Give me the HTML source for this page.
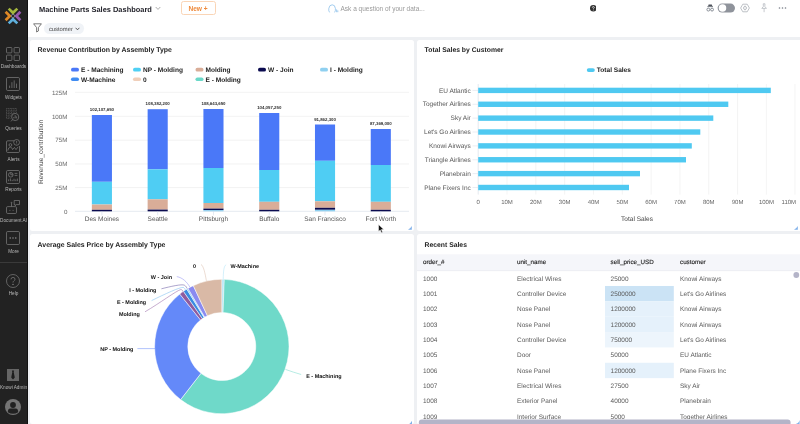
<!DOCTYPE html>
<html><head><meta charset="utf-8"><title>Machine Parts Sales Dashboard</title>
<style>
*{box-sizing:border-box}
html,body{margin:0;padding:0}
body{width:800px;height:424px;overflow:hidden;background:#eef0f3;font-family:"Liberation Sans",sans-serif;position:relative;color:#222}
#app{position:absolute;left:0;top:0;width:800px;height:424px;overflow:hidden;will-change:transform;transform:translateZ(0)}
.abs{position:absolute}
#side{position:absolute;left:0;top:0;width:28px;height:424px;background:#222;border-right:1px solid #111}
#side .lbl{position:absolute;left:-10px;width:47px;text-align:center;font-size:4.7px;color:#b9b9b9;white-space:nowrap;line-height:6px}
#side svg{position:absolute;overflow:visible}
#hdr{position:absolute;left:28px;top:0;right:0;height:37px;background:#fff}
.panel{position:absolute;background:#fff;border-radius:2.5px;overflow:hidden}
.ptitle{position:absolute;font-weight:bold;font-size:7px;color:#222;white-space:nowrap;line-height:10px}
.t{position:absolute;white-space:nowrap}
svg text{font-family:"Liberation Sans",sans-serif;text-rendering:geometricPrecision}
</style></head>
<body>
<div id="app"><div id="hdr"><svg class="abs" style="left:0;top:0" width="200" height="20" viewBox="28 0 200 20"><text x="39" y="11.8" font-size="7.45" font-weight="bold" fill="#23232b">Machine Parts Sales Dashboard</text></svg><svg class="abs" style="left:126.5px;top:6px" width="6" height="5" viewBox="0 0 6 5"><path d="M0.7,1L3,3.4L5.3,1" fill="none" stroke="#888" stroke-width="0.7"/></svg><div class="abs" style="left:152.5px;top:1px;width:35px;height:14px;border:1px solid #fad5b6;border-radius:2.5px;color:#ee8a3c;font-weight:bold;font-size:6.6px;line-height:13.4px;text-align:center">New +</div><svg class="abs" style="left:299.5px;top:3.6px" width="11" height="10" viewBox="0 0 11 10"><g fill="none" stroke="#7db7e8" stroke-width="0.7"><path d="M1.6,8.4Q0.4,7 0.8,4.4Q1.4,0.8 4.2,0.8Q7,0.8 7.4,4.4Q7.7,7 6.6,8.4"/><path d="M8.6,5.4V8.2M9.8,6.4V8.2"/></g></svg><div class="t" style="left:312.5px;top:3.6px;font-size:6.5px;line-height:10px;color:#999">Ask a question of your data...</div><svg class="abs" style="left:561.8px;top:5.2px" width="6.6" height="6.6" viewBox="0 0 10 10"><circle cx="5" cy="5" r="5" fill="#333"/><path d="M3.5,4Q3.5,2.4 5,2.4Q6.5,2.4 6.5,3.8Q6.5,4.7 5.6,5.1Q5,5.4 5,6.2" fill="none" stroke="#fff" stroke-width="1.1"/><circle cx="5" cy="7.7" r="0.7" fill="#fff"/></svg><svg class="abs" style="left:678px;top:4px" width="8.4" height="8.4" viewBox="0 0 8.4 8.4"><path d="M2.6,0.6H5.8L6.3,2.2H2.1Z" fill="#4f535c"/><rect x="1.4" y="2.2" width="5.6" height="0.9" fill="#6b7079"/><g fill="none" stroke="#7d838d" stroke-width="0.9"><circle cx="2.35" cy="5.6" r="1.45"/><circle cx="6.05" cy="5.6" r="1.45"/></g></svg><svg class="abs" style="left:688px;top:2px" width="22" height="13" viewBox="716 2 22 13"><rect x="717.6" y="3.6" width="17.4" height="9" rx="4.5" fill="#8f939b"/><circle cx="722.5" cy="8.1" r="3.75" fill="#fff"/></svg><svg class="abs" style="left:711.6px;top:2.9px" width="10" height="10" viewBox="-5 -5 10 10"><g fill="none" stroke="#9aa0a8" stroke-width="0.65"><path d="M-4.4,0L-2.2,-3.8H2.2L4.4,0L2.2,3.8H-2.2Z"/><circle r="1.5"/><path d="M0,-1.5V-2.4M0,1.5V2.4"/></g></svg><svg class="abs" style="left:731.5px;top:3.2px" width="8" height="10" viewBox="0 0 8 10"><g fill="none" stroke="#a8adb5" stroke-width="0.65"><path d="M3.2,0.8H5L4.8,3.4L6.4,5.4H1.8L3.4,3.4Z"/><path d="M4.1,5.4V9.2"/></g></svg><svg class="abs" style="left:750px;top:6px" width="9" height="4" viewBox="0 0 9 4"><g fill="#8a8f98"><rect x="0.8" y="1.3" width="1.4" height="1.4" rx="0.3"/><rect x="3.8" y="1.3" width="1.4" height="1.4" rx="0.3"/><rect x="6.8" y="1.3" width="1.4" height="1.4" rx="0.3"/></g></svg><svg class="abs" style="left:4.600000000000001px;top:23.4px" width="9" height="10" viewBox="0 0 9 10"><path d="M0.6,0.8H8.4L5.4,4.6V8L3.6,9V4.6Z" fill="none" stroke="#444" stroke-width="0.7" stroke-linejoin="round"/></svg><div class="abs" style="left:16px;top:23px;width:39.5px;height:11.4px;border-radius:5.7px;background:#f0f3f7"></div><svg class="abs" style="left:16px;top:22px" width="40" height="13" viewBox="44 22 40 13"><text x="48.9" y="30.6" font-size="5.85" fill="#444">customer</text></svg><svg class="abs" style="left:47.3px;top:27px" width="5" height="4" viewBox="0 0 5 4"><path d="M0.6,0.8L2.5,2.8L4.4,0.8" fill="none" stroke="#333" stroke-width="0.8"/></svg></div>
<div class="panel" style="left:30px;top:40px;width:384px;height:191px"><svg class="abs" style="left:0;top:0" width="384" height="191" viewBox="30 40 384 191"><text x="37.6" y="51.65" font-size="6.93" font-weight="bold" fill="#222">Revenue Contribution by Assembly Type</text><rect x="71" y="67.8" width="8" height="3.7" rx="1.85" fill="#4a78f8"/><text x="81" y="71.89999999999999" font-size="6.55" font-weight="bold" fill="#222">E - Machining</text><rect x="133" y="67.8" width="8" height="3.7" rx="1.85" fill="#4fd0f4"/><text x="143" y="71.89999999999999" font-size="6.55" font-weight="bold" fill="#222">NP - Molding</text><rect x="195.5" y="67.8" width="8" height="3.7" rx="1.85" fill="#d9ad98"/><text x="205.5" y="71.89999999999999" font-size="6.55" font-weight="bold" fill="#222">Molding</text><rect x="258" y="67.8" width="8" height="3.7" rx="1.85" fill="#0b0b4f"/><text x="268" y="71.89999999999999" font-size="6.55" font-weight="bold" fill="#222">W - Join</text><rect x="320" y="67.8" width="8" height="3.7" rx="1.85" fill="#8fd0f0"/><text x="330" y="71.89999999999999" font-size="6.55" font-weight="bold" fill="#222">I - Molding</text><rect x="71" y="77.4" width="8" height="3.7" rx="1.85" fill="#3f8cf2"/><text x="81" y="81.5" font-size="6.55" font-weight="bold" fill="#222">W-Machine</text><rect x="133" y="77.4" width="8" height="3.7" rx="1.85" fill="#f0cfba"/><text x="143" y="81.5" font-size="6.55" font-weight="bold" fill="#222">0</text><rect x="195.5" y="77.4" width="8" height="3.7" rx="1.85" fill="#6bd8c8"/><text x="205.5" y="81.5" font-size="6.55" font-weight="bold" fill="#222">E - Molding</text><line x1="75" x2="409" y1="92.3" y2="92.3" stroke="#e9e9e9" stroke-width="0.6"/><text x="67.4" y="94.5" font-size="6.2" text-anchor="end" fill="#666">125M</text><line x1="75" x2="409" y1="116.3" y2="116.3" stroke="#e9e9e9" stroke-width="0.6"/><text x="67.4" y="118.5" font-size="6.2" text-anchor="end" fill="#666">100M</text><line x1="75" x2="409" y1="140.2" y2="140.2" stroke="#e9e9e9" stroke-width="0.6"/><text x="67.4" y="142.39999999999998" font-size="6.2" text-anchor="end" fill="#666">75M</text><line x1="75" x2="409" y1="164" y2="164" stroke="#e9e9e9" stroke-width="0.6"/><text x="67.4" y="166.2" font-size="6.2" text-anchor="end" fill="#666">50M</text><line x1="75" x2="409" y1="187.6" y2="187.6" stroke="#e9e9e9" stroke-width="0.6"/><text x="67.4" y="189.79999999999998" font-size="6.2" text-anchor="end" fill="#666">25M</text><line x1="75" x2="409" y1="211.3" y2="211.3" stroke="#d4dbe6" stroke-width="0.6"/><text x="67.4" y="213.5" font-size="6.2" text-anchor="end" fill="#666">0</text><text transform="translate(43.3,152) rotate(-90)" font-size="6.6" text-anchor="middle" fill="#444">Revenue_contribution</text><rect x="91.85" y="115" width="20.1" height="66.80" fill="#4a78f8"/><rect x="91.85" y="181.8" width="20.1" height="22.70" fill="#4fcdf3"/><rect x="91.85" y="204.5" width="20.1" height="5.30" fill="#d9ad98"/><rect x="91.85" y="209.8" width="20.1" height="1.50" fill="#0c0c50"/><text x="101.90" y="111" font-size="4.35" font-weight="bold" text-anchor="middle" fill="#333">102,107,650</text><text x="101.90" y="221.35" font-size="6.5" text-anchor="middle" fill="#555">Des Moines</text><line x1="101.90" x2="101.90" y1="211.3" y2="215.3" stroke="#ccd6eb" stroke-width="0.5"/><rect x="147.63" y="109.2" width="20.1" height="60.10" fill="#4a78f8"/><rect x="147.63" y="169.3" width="20.1" height="30.00" fill="#4fcdf3"/><rect x="147.63" y="199.3" width="20.1" height="10.30" fill="#d9ad98"/><rect x="147.63" y="209.6" width="20.1" height="1.70" fill="#0c0c50"/><text x="157.68" y="105.2" font-size="4.35" font-weight="bold" text-anchor="middle" fill="#333">108,382,200</text><text x="157.68" y="221.35" font-size="6.5" text-anchor="middle" fill="#555">Seattle</text><line x1="157.68" x2="157.68" y1="211.3" y2="215.3" stroke="#ccd6eb" stroke-width="0.5"/><rect x="203.41" y="109" width="20.1" height="59.00" fill="#4a78f8"/><rect x="203.41" y="168" width="20.1" height="35.00" fill="#4fcdf3"/><rect x="203.41" y="203" width="20.1" height="5.60" fill="#d9ad98"/><rect x="203.41" y="208.6" width="20.1" height="1.50" fill="#0c0c50"/><rect x="203.41" y="210.1" width="20.1" height="1.20" fill="#8fd0f0"/><text x="213.46" y="105" font-size="4.35" font-weight="bold" text-anchor="middle" fill="#333">108,643,650</text><text x="213.46" y="221.35" font-size="6.5" text-anchor="middle" fill="#555">Pittsburgh</text><line x1="213.46" x2="213.46" y1="211.3" y2="215.3" stroke="#ccd6eb" stroke-width="0.5"/><rect x="259.19" y="113" width="20.1" height="57.00" fill="#4a78f8"/><rect x="259.19" y="170" width="20.1" height="31.80" fill="#4fcdf3"/><rect x="259.19" y="201.8" width="20.1" height="8.00" fill="#d9ad98"/><rect x="259.19" y="209.8" width="20.1" height="1.50" fill="#0c0c50"/><text x="269.24" y="109" font-size="4.35" font-weight="bold" text-anchor="middle" fill="#333">104,057,250</text><text x="269.24" y="221.35" font-size="6.5" text-anchor="middle" fill="#555">Buffalo</text><line x1="269.24" x2="269.24" y1="211.3" y2="215.3" stroke="#ccd6eb" stroke-width="0.5"/><rect x="314.97" y="124.5" width="20.1" height="36.30" fill="#4a78f8"/><rect x="314.97" y="160.8" width="20.1" height="40.50" fill="#4fcdf3"/><rect x="314.97" y="201.3" width="20.1" height="6.50" fill="#d9ad98"/><rect x="314.97" y="207.8" width="20.1" height="2.00" fill="#0c0c50"/><rect x="314.97" y="209.8" width="20.1" height="1.50" fill="#8fd0f0"/><text x="325.02" y="120.5" font-size="4.35" font-weight="bold" text-anchor="middle" fill="#333">91,862,300</text><text x="325.02" y="221.35" font-size="6.5" text-anchor="middle" fill="#555">San Francisco</text><line x1="325.02" x2="325.02" y1="211.3" y2="215.3" stroke="#ccd6eb" stroke-width="0.5"/><rect x="370.75" y="129" width="20.1" height="36.00" fill="#4a78f8"/><rect x="370.75" y="165" width="20.1" height="36.80" fill="#4fcdf3"/><rect x="370.75" y="201.8" width="20.1" height="8.00" fill="#d9ad98"/><rect x="370.75" y="209.8" width="20.1" height="1.50" fill="#0c0c50"/><text x="380.80" y="125" font-size="4.35" font-weight="bold" text-anchor="middle" fill="#333">87,369,000</text><text x="380.80" y="221.35" font-size="6.5" text-anchor="middle" fill="#555">Fort Worth</text><line x1="380.80" x2="380.80" y1="211.3" y2="215.3" stroke="#ccd6eb" stroke-width="0.5"/></svg><svg class="abs" style="right:2px;bottom:1.4px" width="3.8" height="3.8" viewBox="0 0 4 4"><path d="M4,0V4H0Q2.6,2.6 4,0Z" fill="#7fb0ea"/></svg></div>
<div class="panel" style="left:417px;top:40px;width:383px;height:191px;border-radius:2.5px 0 0 2.5px"><svg class="abs" style="left:0;top:0" width="383" height="191" viewBox="417 40 383 191"><text x="424.6" y="51.65" font-size="6.8" font-weight="bold" fill="#222">Total Sales by Customer</text><rect x="586.8" y="68.2" width="8" height="3.7" rx="1.85" fill="#4fc9f1"/><text x="596.8" y="72.3" font-size="6.55" font-weight="bold" fill="#222">Total Sales</text><line x1="478.20" x2="478.20" y1="84" y2="194.6" stroke="#d4dbe6" stroke-width="0.6"/><text x="478.20" y="204.2" font-size="6" text-anchor="middle" fill="#666">0</text><line x1="507.02" x2="507.02" y1="84" y2="194.6" stroke="#ececec" stroke-width="0.6"/><text x="507.02" y="204.2" font-size="6" text-anchor="middle" fill="#666">10M</text><line x1="535.84" x2="535.84" y1="84" y2="194.6" stroke="#ececec" stroke-width="0.6"/><text x="535.84" y="204.2" font-size="6" text-anchor="middle" fill="#666">20M</text><line x1="564.66" x2="564.66" y1="84" y2="194.6" stroke="#ececec" stroke-width="0.6"/><text x="564.66" y="204.2" font-size="6" text-anchor="middle" fill="#666">30M</text><line x1="593.48" x2="593.48" y1="84" y2="194.6" stroke="#ececec" stroke-width="0.6"/><text x="593.48" y="204.2" font-size="6" text-anchor="middle" fill="#666">40M</text><line x1="622.30" x2="622.30" y1="84" y2="194.6" stroke="#ececec" stroke-width="0.6"/><text x="622.30" y="204.2" font-size="6" text-anchor="middle" fill="#666">50M</text><line x1="651.12" x2="651.12" y1="84" y2="194.6" stroke="#ececec" stroke-width="0.6"/><text x="651.12" y="204.2" font-size="6" text-anchor="middle" fill="#666">60M</text><line x1="679.94" x2="679.94" y1="84" y2="194.6" stroke="#ececec" stroke-width="0.6"/><text x="679.94" y="204.2" font-size="6" text-anchor="middle" fill="#666">70M</text><line x1="708.76" x2="708.76" y1="84" y2="194.6" stroke="#ececec" stroke-width="0.6"/><text x="708.76" y="204.2" font-size="6" text-anchor="middle" fill="#666">80M</text><line x1="737.58" x2="737.58" y1="84" y2="194.6" stroke="#ececec" stroke-width="0.6"/><text x="737.58" y="204.2" font-size="6" text-anchor="middle" fill="#666">90M</text><line x1="766.40" x2="766.40" y1="84" y2="194.6" stroke="#ececec" stroke-width="0.6"/><text x="766.40" y="204.2" font-size="6" text-anchor="middle" fill="#666">100M</text><line x1="795.00" x2="795.00" y1="84" y2="194.6" stroke="#ececec" stroke-width="0.6"/><text x="788.80" y="204.2" font-size="6" text-anchor="middle" fill="#666">110M</text><rect x="478.2" y="87.70" width="292.60" height="5.4" fill="#4fc9f1"/><line x1="472.5" x2="478.2" y1="90.40" y2="90.40" stroke="#d4dbe6" stroke-width="0.5"/><text x="470.8" y="92.60" font-size="6.5" text-anchor="end" fill="#555">EU Atlantic</text><rect x="478.2" y="101.57" width="250.10" height="5.4" fill="#4fc9f1"/><line x1="472.5" x2="478.2" y1="104.27" y2="104.27" stroke="#d4dbe6" stroke-width="0.5"/><text x="470.8" y="106.47" font-size="6.5" text-anchor="end" fill="#555">Together Airlines</text><rect x="478.2" y="115.44" width="235.10" height="5.4" fill="#4fc9f1"/><line x1="472.5" x2="478.2" y1="118.14" y2="118.14" stroke="#d4dbe6" stroke-width="0.5"/><text x="470.8" y="120.34" font-size="6.5" text-anchor="end" fill="#555">Sky Air</text><rect x="478.2" y="129.31" width="222.10" height="5.4" fill="#4fc9f1"/><line x1="472.5" x2="478.2" y1="132.01" y2="132.01" stroke="#d4dbe6" stroke-width="0.5"/><text x="470.8" y="134.21" font-size="6.5" text-anchor="end" fill="#555">Let's Go Airlines</text><rect x="478.2" y="143.18" width="213.60" height="5.4" fill="#4fc9f1"/><line x1="472.5" x2="478.2" y1="145.88" y2="145.88" stroke="#d4dbe6" stroke-width="0.5"/><text x="470.8" y="148.08" font-size="6.5" text-anchor="end" fill="#555">Knowi Airways</text><rect x="478.2" y="157.05" width="207.80" height="5.4" fill="#4fc9f1"/><line x1="472.5" x2="478.2" y1="159.75" y2="159.75" stroke="#d4dbe6" stroke-width="0.5"/><text x="470.8" y="161.95" font-size="6.5" text-anchor="end" fill="#555">Triangle Airlines</text><rect x="478.2" y="170.92" width="161.80" height="5.4" fill="#4fc9f1"/><line x1="472.5" x2="478.2" y1="173.62" y2="173.62" stroke="#d4dbe6" stroke-width="0.5"/><text x="470.8" y="175.82" font-size="6.5" text-anchor="end" fill="#555">Planebrain</text><rect x="478.2" y="184.79" width="150.80" height="5.4" fill="#4fc9f1"/><line x1="472.5" x2="478.2" y1="187.49" y2="187.49" stroke="#d4dbe6" stroke-width="0.5"/><text x="470.8" y="189.69" font-size="6.5" text-anchor="end" fill="#555">Plane Fixers Inc</text><text x="637" y="221.4" font-size="6.5" text-anchor="middle" fill="#444">Total Sales</text></svg><svg class="abs" style="right:2px;bottom:1.4px" width="3.8" height="3.8" viewBox="0 0 4 4"><path d="M4,0V4H0Q2.6,2.6 4,0Z" fill="#7fb0ea"/></svg></div>
<div class="panel" style="left:30px;top:234px;width:384px;height:190px"><svg class="abs" style="left:0;top:0" width="384" height="190" viewBox="30 234 384 190"><text x="37.6" y="246.8" font-size="6.93" font-weight="bold" fill="#222">Average Sales Price by Assembly Type</text><path d="M221.80,279.30A67.2,67.2 0 0 1 224.26,279.35L223.05,312.52A34,34 0 0 0 221.80,312.50Z" fill="#a9e1f6" stroke="#fff" stroke-width="0.5" stroke-linejoin="round"/><path d="M224.26,279.35A67.2,67.2 0 1 1 180.61,399.60L200.96,373.37A34,34 0 1 0 223.05,312.52Z" fill="#6fd9c9" stroke="#fff" stroke-width="0.5" stroke-linejoin="round"/><path d="M180.61,399.60A67.2,67.2 0 0 1 179.78,294.06L200.54,319.97A34,34 0 0 0 200.96,373.37Z" fill="#6489f9" stroke="#fff" stroke-width="0.5" stroke-linejoin="round"/><path d="M179.78,294.06A67.2,67.2 0 0 1 183.45,291.32L202.40,318.58A34,34 0 0 0 200.54,319.97Z" fill="#8f5b9e" stroke="#fff" stroke-width="0.5" stroke-linejoin="round"/><path d="M183.45,291.32A67.2,67.2 0 0 1 186.79,289.14L204.09,317.48A34,34 0 0 0 202.40,318.58Z" fill="#3a8be2" stroke="#fff" stroke-width="0.5" stroke-linejoin="round"/><path d="M186.79,289.14A67.2,67.2 0 0 1 188.00,288.42L204.70,317.11A34,34 0 0 0 204.09,317.48Z" fill="#8fd0f0" stroke="#fff" stroke-width="0.5" stroke-linejoin="round"/><path d="M188.00,288.42A67.2,67.2 0 0 1 193.29,285.65L207.38,315.71A34,34 0 0 0 204.70,317.11Z" fill="#8a8af0" stroke="#fff" stroke-width="0.5" stroke-linejoin="round"/><path d="M193.29,285.65A67.2,67.2 0 0 1 221.80,279.30L221.80,312.50A34,34 0 0 0 207.38,315.71Z" fill="#d9b9a6" stroke="#fff" stroke-width="0.5" stroke-linejoin="round"/><path d="M226.2,264.6C223.6,266 223.4,272 223.2,279.6" fill="none" stroke="#a9e1f6" stroke-width="0.5"/><path d="M201,264.4C203.6,266 205,273 206.4,280.8" fill="none" stroke="#d9b9a6" stroke-width="0.5"/><path d="M176.8,276.6C182.6,277.6 187,282 189.8,287" fill="none" stroke="#8a8af0" stroke-width="0.5"/><path d="M161.4,288.8C170,286.6 182,283.8 184.4,285.2C186,286 186.6,287.6 187.2,288.6" fill="none" stroke="#5a4a9a" stroke-width="0.5"/><path d="M151.6,300.6C165,294 180,287 183.2,287.4C184.6,287.8 185,289 185.4,290" fill="none" stroke="#6fb6ee" stroke-width="0.5"/><path d="M145,311.8C160,303 176,291 180.6,289.6C182,289.4 182.6,290.6 183,291.6" fill="none" stroke="#8f5b9e" stroke-width="0.5"/><path d="M137.4,348.6H155" fill="none" stroke="#6489f9" stroke-width="0.5"/><path d="M285.4,369.4C291,371.4 296,373 301.2,374.5" fill="none" stroke="#6fd9c9" stroke-width="0.5"/><text x="230.4" y="267.6" font-size="5.45" font-weight="bold" text-anchor="start" fill="#111">W-Machine</text><text x="196" y="267.6" font-size="5.45" font-weight="bold" text-anchor="end" fill="#111">0</text><text x="172" y="279.4" font-size="5.45" font-weight="bold" text-anchor="end" fill="#111">W - Join</text><text x="156.4" y="291.8" font-size="5.45" font-weight="bold" text-anchor="end" fill="#111">I - Molding</text><text x="146.2" y="303.8" font-size="5.45" font-weight="bold" text-anchor="end" fill="#111">E - Molding</text><text x="139.8" y="315.6" font-size="5.45" font-weight="bold" text-anchor="end" fill="#111">Molding</text><text x="133.4" y="350.6" font-size="5.45" font-weight="bold" text-anchor="end" fill="#111">NP - Molding</text><text x="306.2" y="378.2" font-size="5.45" font-weight="bold" text-anchor="start" fill="#111">E - Machining</text><path d="M412,420.8V424.6H408.2Q410.8,423.4 412,420.8Z" fill="#7fb0ea"/></svg></div>
<div class="panel" style="left:417px;top:234px;width:383px;height:190px;border-radius:2.5px 0 0 2.5px"><svg class="abs" style="left:0;top:0" width="383" height="190" viewBox="417 234 383 190"><text x="424.6" y="246.8" font-size="6.8" font-weight="bold" fill="#222">Recent Sales</text><rect x="417" y="254.3" width="383" height="16.3" fill="#f5f6fa"/><rect x="417" y="270.5" width="383" height="0.6" fill="#e4e6ec"/><text x="423" y="264.15" font-size="6.25" fill="#1c1c1c" stroke="#1c1c1c" stroke-width="0.13">order_#</text><text x="517" y="264.15" font-size="6.25" fill="#1c1c1c" stroke="#1c1c1c" stroke-width="0.13">unit_name</text><text x="610.6" y="264.15" font-size="6.25" fill="#1c1c1c" stroke="#1c1c1c" stroke-width="0.13">sell_price_USD</text><text x="680" y="264.15" font-size="6.25" fill="#1c1c1c" stroke="#1c1c1c" stroke-width="0.13">customer</text><text x="423" y="280.60" font-size="6.45" fill="#5a5a5a">1000</text><text x="517" y="280.60" font-size="6.45" fill="#5a5a5a">Electrical Wires</text><text x="610.6" y="280.60" font-size="6.45" fill="#5a5a5a">25000</text><text x="680" y="280.60" font-size="6.45" fill="#5a5a5a">Knowi Airways</text><rect x="605" y="285.98" width="68.8" height="15.36" fill="#cbe3f5"/><text x="423" y="295.96" font-size="6.45" fill="#5a5a5a">1001</text><text x="517" y="295.96" font-size="6.45" fill="#5a5a5a">Controller Device</text><text x="610.6" y="295.96" font-size="6.45" fill="#5a5a5a">2500000</text><text x="680" y="295.96" font-size="6.45" fill="#5a5a5a">Let's Go Airlines</text><rect x="605" y="301.34" width="68.8" height="15.36" fill="#e5f1fb"/><text x="423" y="311.32" font-size="6.45" fill="#5a5a5a">1002</text><text x="517" y="311.32" font-size="6.45" fill="#5a5a5a">Nose Panel</text><text x="610.6" y="311.32" font-size="6.45" fill="#5a5a5a">1200000</text><text x="680" y="311.32" font-size="6.45" fill="#5a5a5a">Knowi Airways</text><rect x="605" y="316.70" width="68.8" height="15.36" fill="#e5f1fb"/><text x="423" y="326.68" font-size="6.45" fill="#5a5a5a">1003</text><text x="517" y="326.68" font-size="6.45" fill="#5a5a5a">Nose Panel</text><text x="610.6" y="326.68" font-size="6.45" fill="#5a5a5a">1200000</text><text x="680" y="326.68" font-size="6.45" fill="#5a5a5a">Knowi Airways</text><rect x="605" y="332.06" width="68.8" height="15.36" fill="#edf5fc"/><text x="423" y="342.04" font-size="6.45" fill="#5a5a5a">1004</text><text x="517" y="342.04" font-size="6.45" fill="#5a5a5a">Controller Device</text><text x="610.6" y="342.04" font-size="6.45" fill="#5a5a5a">750000</text><text x="680" y="342.04" font-size="6.45" fill="#5a5a5a">Let's Go Airlines</text><text x="423" y="357.40" font-size="6.45" fill="#5a5a5a">1005</text><text x="517" y="357.40" font-size="6.45" fill="#5a5a5a">Door</text><text x="610.6" y="357.40" font-size="6.45" fill="#5a5a5a">50000</text><text x="680" y="357.40" font-size="6.45" fill="#5a5a5a">EU Atlantic</text><rect x="605" y="362.78" width="68.8" height="15.36" fill="#e5f1fb"/><text x="423" y="372.76" font-size="6.45" fill="#5a5a5a">1006</text><text x="517" y="372.76" font-size="6.45" fill="#5a5a5a">Nose Panel</text><text x="610.6" y="372.76" font-size="6.45" fill="#5a5a5a">1200000</text><text x="680" y="372.76" font-size="6.45" fill="#5a5a5a">Plane Fixers Inc</text><text x="423" y="388.12" font-size="6.45" fill="#5a5a5a">1007</text><text x="517" y="388.12" font-size="6.45" fill="#5a5a5a">Electrical Wires</text><text x="610.6" y="388.12" font-size="6.45" fill="#5a5a5a">27500</text><text x="680" y="388.12" font-size="6.45" fill="#5a5a5a">Sky Air</text><text x="423" y="403.48" font-size="6.45" fill="#5a5a5a">1008</text><text x="517" y="403.48" font-size="6.45" fill="#5a5a5a">Exterior Panel</text><text x="610.6" y="403.48" font-size="6.45" fill="#5a5a5a">40000</text><text x="680" y="403.48" font-size="6.45" fill="#5a5a5a">Planebrain</text><text x="423" y="418.84" font-size="6.45" fill="#5a5a5a">1009</text><text x="517" y="418.84" font-size="6.45" fill="#5a5a5a">Interior Surface</text><text x="610.6" y="418.84" font-size="6.45" fill="#5a5a5a">5000</text><text x="680" y="418.84" font-size="6.45" fill="#5a5a5a">Together Airlines</text><circle cx="796.3" cy="275" r="2.9" fill="#b4b4c8"/><rect x="417" y="419" width="383" height="6" fill="#fff"/><rect x="418.8" y="419.6" width="371.8" height="8" rx="3" fill="#b4b4c8"/><path d="M799.6,420V424H795.6Q798.8,423.4 799.6,420Z" fill="#7fb0ea"/></svg></div>
<div id="side"><svg style="left:4.6px;top:8px" width="16" height="16" viewBox="-8 -8 16 16">
    <g fill="none" stroke-width="2.7" stroke-linejoin="miter">
      <path d="M-4.3,-7.4L0,-3.2L4.3,-7.4" stroke="#a4b73d"/>
      <path d="M-7.4,-4.3L-3.2,0L-7.4,4.3" stroke="#df8826"/>
      <path d="M7.4,-4.3L3.2,0L7.4,4.3" stroke="#9658ae"/>
      <path d="M-4.3,7.4L0,3.2L4.3,7.4" stroke="#5fb0dc"/>
    </g>
    <circle r="1.7" fill="#2a2a2a" stroke="#8c93a0" stroke-width="0.8"/>
    </svg><svg style="left:6px;top:46.7px" width="14" height="14" viewBox="0 0 14 14"><g fill="none" stroke="#808080" stroke-width="0.7"><rect x="0.5" y="0.5" width="5.4" height="5.4" rx="0.8"/><rect x="8.1" y="0.5" width="5.4" height="5.4" rx="0.8"/><rect x="0.5" y="8.1" width="5.4" height="5.4" rx="0.8"/><rect x="8.1" y="8.1" width="5.4" height="5.4" rx="0.8"/></g></svg><div class="lbl" style="top:64.3px">Dashboards</div><svg style="left:6px;top:77.3px" width="14" height="14" viewBox="0 0 14 14"><g fill="none" stroke="#808080" stroke-width="0.7"><rect x="0.5" y="0.5" width="13" height="13" rx="1.2"/><path d="M3.6,11V8.6M5.9,11V5.2M8.2,11V3.4M10.5,11V6.6"/></g></svg><div class="lbl" style="top:95.0px">Widgets</div><svg style="left:6px;top:108px" width="14" height="14" viewBox="0 0 14 14"><g fill="none" stroke="#666" stroke-width="0.6"><path d="M0.5,0.5H10.5M0.5,3H10.5M0.5,5.5H10.5M0.5,8H5.5M0.5,10.5H4.5M0.5,0.5V10.5M3,0.5V10.5M5.5,0.5V8M8,0.5V5.5M10.5,0.5V5.5" stroke-dasharray="1 0.7"/></g><g fill="none" stroke="#808080" stroke-width="0.7"><circle cx="9.2" cy="9" r="3.6" fill="#222"/><path d="M6.6,11.6L5,13.4M7.8,10.4V9M9.2,10.4V7.2M10.6,10.4V8.4"/></g></svg><div class="lbl" style="top:125.6px">Queries</div><svg style="left:6px;top:138.6px" width="14" height="14" viewBox="0 0 14 14"><g fill="none" stroke="#808080" stroke-width="0.7"><path d="M8,1.8H1.7Q0.5,1.8 0.5,3V12.3Q0.5,13.5 1.7,13.5H12.3Q13.5,13.5 13.5,12.3V7"/><circle cx="4.4" cy="6" r="1.4"/><path d="M1.8,11.6Q2.2,8.2 4.4,8.2Q6,8.2 6.6,10.6L8.4,8.4L10,10.6L12.2,7.8"/><circle cx="10.6" cy="3.4" r="2.9"/><path d="M10.6,1.8V3.8M10.6,4.6V5.2"/></g></svg><div class="lbl" style="top:156.5px">Alerts</div><svg style="left:6px;top:169.5px" width="14" height="14" viewBox="0 0 14 14"><g fill="none" stroke="#808080" stroke-width="0.7"><rect x="0.5" y="0.5" width="13" height="13" rx="1.2"/><circle cx="4.8" cy="4.8" r="2.3"/><path d="M4.8,2.5V4.8H7.1M8.6,3.4H11.4M8.6,5.4H11.4M2.6,11.2V9.4M4.4,11.2V8.4M6.2,11.2V9.8M8,11.2V8.8M9.8,11.2V9.4M11.4,11.2V8.6"/></g></svg><div class="lbl" style="top:187.3px">Reports</div><svg style="left:6px;top:200px" width="14" height="14" viewBox="0 0 14 14"><g fill="none" stroke="#808080" stroke-width="0.7"><rect x="0.5" y="6.6" width="10" height="6.9" rx="1.2"/><path d="M5.5,6.6V3.4M3.4,10.4H4.4M6.6,10.4H7.6"/><circle cx="5.5" cy="2.8" r="0.5"/><path d="M8.2,0.5H13.5V4.6H10.4L9.2,5.8V4.6H8.2Z"/></g></svg><div class="lbl" style="top:217.8px">Document AI</div><svg style="left:6px;top:230.8px" width="14" height="14" viewBox="0 0 14 14"><g fill="none" stroke="#808080" stroke-width="0.7"><rect x="0.5" y="0.5" width="13" height="13" rx="1.2"/></g><g fill="#9a9a9a"><circle cx="4.2" cy="7" r="0.7"/><circle cx="7" cy="7" r="0.7"/><circle cx="9.8" cy="7" r="0.7"/></g></svg><div class="lbl" style="top:248.6px">More</div><div class="abs" style="left:0;top:262.2px;width:26.8px;height:0.7px;background:#3a3a3a"></div><svg style="left:6px;top:273.6px" width="14" height="14" viewBox="0 0 14 14"><g fill="none" stroke="#808080" stroke-width="0.7"><circle cx="7" cy="7" r="6.5"/><path d="M5,5.4Q5,3.4 7,3.4Q9,3.4 9,5.2Q9,6.4 7.8,7Q7,7.5 7,8.6"/></g><circle cx="7" cy="10.4" r="0.6" fill="#9a9a9a"/></svg><div class="lbl" style="top:291.0px">Help</div><svg style="left:7px;top:368.8px" width="12" height="12" viewBox="0 0 12 12"><rect width="12" height="12" fill="#666"/><path d="M4.9,1.6H7.1L6.7,3.2L7.8,8.4L6,10.4L4.2,8.4L5.3,3.2Z" fill="#1e1e1e"/></svg><div class="lbl" style="top:384.6px">Knowi Admin</div><svg style="left:5px;top:399px" width="16" height="16" viewBox="0 0 16 16"><circle cx="8" cy="8" r="8" fill="#757575"/><circle cx="8" cy="6" r="2.9" fill="#222"/><path d="M2.8,13.2Q2.8,9.4 5.2,9.4H10.8Q13.2,9.4 13.2,13.2Q10.8,14.8 8,14.8Q5.2,14.8 2.8,13.2Z" fill="#222"/></svg></div>
<svg class="abs" style="left:377.7px;top:224px" width="7" height="10" viewBox="0 0 7 10"><path d="M0.5,0.4V7.6L2.2,6L3.4,8.8L4.6,8.3L3.4,5.6H5.8Z" fill="#111" stroke="#fff" stroke-width="0.5"/></svg></div>
</body></html>
